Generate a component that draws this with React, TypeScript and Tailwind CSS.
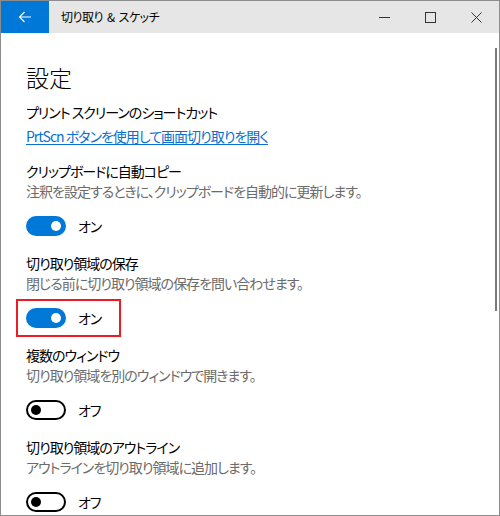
import React, { useState } from 'react';

interface Setting {
  title: string;
  desc?: string;
  on: boolean;
  marked?: boolean;
}

const initial: Setting[] = [
  { title: 'クリップボードに自動コピー', desc: '注釈を設定するときに、クリップボードを自動的に更新します。', on: true },
  { title: '切り取り領域の保存', desc: '閉じる前に切り取り領域の保存を問い合わせます。', on: true, marked: true },
  { title: '複数のウィンドウ', desc: '切り取り領域を別のウィンドウで開きます。', on: false },
  { title: '切り取り領域のアウトライン', desc: 'アウトラインを切り取り領域に追加します。', on: false },
];

const Toggle: React.FC<{ on: boolean; onClick: () => void }> = ({ on, onClick }) => (
  <button
    onClick={onClick}
    className={
      on
        ? 'relative w-10 h-5 rounded-full bg-[#0078d7]'
        : 'relative w-10 h-5 rounded-full border-2 border-black bg-white'
    }
  >
    {on ? (
      <span className="absolute right-[5px] top-[5px] w-[10px] h-[10px] rounded-full bg-white" />
    ) : (
      <span className="absolute left-[3px] top-[3px] w-[10px] h-[10px] rounded-full bg-black" />
    )}
  </button>
);

const App: React.FC = () => {
  const [settings, setSettings] = useState<Setting[]>(initial);

  const flip = (index: number) => {
    const next = [...settings];
    next[index] = { ...next[index], on: !next[index].on };
    setSettings(next);
  };

  return (
    <div
      className="relative w-[500px] h-[516px] overflow-hidden bg-white border border-[#8c8c8c] text-black [font-feature-settings:'palt'] font-['Noto_Sans_CJK_JP','Noto_Sans',sans-serif]"
    >
      {/* title bar */}
      <div className="flex h-8 bg-[#e6e6e6]">
        <div className="flex w-12 items-center justify-center bg-[#0078d7]">
          <svg width="14" height="12" viewBox="0 0 14 12" fill="none" stroke="white" strokeWidth="1.1">
            <path d="M13 6H1.5M6.5 1L1.5 6l5 5" />
          </svg>
        </div>
        <div className="flex items-center gap-[4px] pl-3 text-[12px] tracking-[-0.5px]">
          <span>切り取り</span>
          <span>&amp;</span>
          <span>スケッチ</span>
        </div>
        <div className="ml-auto flex">
          <div className="flex w-[46px] items-center justify-center">
            <svg width="11" height="11" viewBox="0 0 11 11" stroke="#333" strokeWidth="1">
              <path d="M0 5.5h11" />
            </svg>
          </div>
          <div className="flex w-[46px] items-center justify-center">
            <svg width="11" height="11" viewBox="0 0 11 11" fill="none" stroke="#333" strokeWidth="1">
              <rect x="0.5" y="0.5" width="10" height="10" />
            </svg>
          </div>
          <div className="flex w-[46px] items-center justify-center">
            <svg width="11" height="11" viewBox="0 0 11 11" stroke="#333" strokeWidth="1">
              <path d="M0.5 0.5l10 10M10.5 0.5l-10 10" />
            </svg>
          </div>
        </div>
      </div>

      {/* scroll indicator */}
      <div className="absolute right-[2px] top-[47px] h-[263px] w-[2px] bg-[#7a7a7a]" />

      <div className="pl-[25px] pt-[28px] text-[14px] leading-[20px] tracking-[-1px]">
        <h1 className="text-[23px] leading-[32px] font-light tracking-normal">設定</h1>
        <div className="mt-[9px]">プリント スクリーンのショートカット</div>
        <a href="#" className="mt-[4px] block text-[#0a6fcf] underline underline-offset-2">
          PrtScn ボタンを使用して画面切り取りを開く
        </a>

        {settings.map((s, i) => (
          <div key={i} className={i === 0 ? 'mt-[15px]' : 'mt-[17px]'}>
            <div>{s.title}</div>
            <div className="text-[#6b6b6b]">{s.desc}</div>
            <div className="relative mt-[15px] flex items-center gap-3">
              <Toggle on={s.on} onClick={() => flip(i)} />
              <span>{s.on ? 'オン' : 'オフ'}</span>
              {s.marked && (
                <div className="absolute left-[-10px] top-[-9px] h-[38px] w-[105px] border-2 border-[#ec1c24]" />
              )}
            </div>
          </div>
        ))}
      </div>
    </div>
  );
};

export default App;
